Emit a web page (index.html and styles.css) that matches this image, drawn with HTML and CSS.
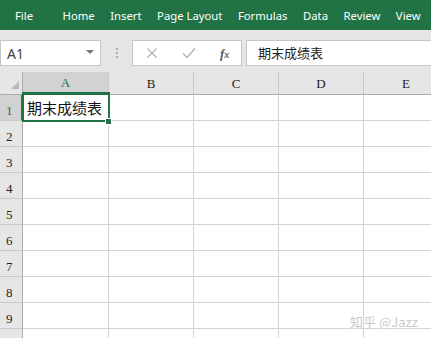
FILE: index.html
```html
<!DOCTYPE html>
<html lang="zh-CN">
<head>
    <meta charset="UTF-8">
    <meta name="viewport" content="width=device-width, initial-scale=1.0">
    <title>期末成绩表 - Excel</title>
    <link rel="stylesheet" href="styles.css">
</head>
<body>
    <!-- Ribbon tabs -->
    <div class="tabs">
        <span class="tab file">File</span>
        <span class="tab">Home</span>
        <span class="tab">Insert</span>
        <span class="tab">Page Layout</span>
        <span class="tab">Formulas</span>
        <span class="tab">Data</span>
        <span class="tab">Review</span>
        <span class="tab">View</span>
    </div>

    <!-- Name box + formula bar -->
    <div class="formula-row">
        <div class="name-box">
            <span>A1</span>
            <span class="caret"></span>
        </div>
        <div class="dots"><i></i><i></i><i></i></div>
        <div class="fx-buttons">
            <svg width="12" height="12" viewBox="0 0 12 12" class="btn-icon">
                <path d="M1.5 1.5 L10.5 10.5 M10.5 1.5 L1.5 10.5" stroke="#b4b4b4" stroke-width="1.3" fill="none"/>
            </svg>
            <svg width="14" height="12" viewBox="0 0 14 12" class="btn-icon">
                <path d="M1 6.5 L5 10.5 L13 1.5" stroke="#b4b4b4" stroke-width="1.5" fill="none"/>
            </svg>
            <span class="fx">f<sub>x</sub></span>
        </div>
        <div class="formula-input">期末成绩表</div>
    </div>

    <!-- Sheet -->
    <div class="sheet">
        <div class="corner"><span class="corner-tri"></span></div>
        <div class="col-head selected">A</div>
        <div class="col-head">B</div>
        <div class="col-head">C</div>
        <div class="col-head">D</div>
        <div class="col-head">E</div>

        <div class="row-head selected">1</div>
        <div class="cell active">期末成绩表</div>
        <div class="cell"></div><div class="cell"></div><div class="cell"></div><div class="cell"></div>

        <div class="row-head">2</div>
        <div class="cell"></div><div class="cell"></div><div class="cell"></div><div class="cell"></div><div class="cell"></div>
        <div class="row-head">3</div>
        <div class="cell"></div><div class="cell"></div><div class="cell"></div><div class="cell"></div><div class="cell"></div>
        <div class="row-head">4</div>
        <div class="cell"></div><div class="cell"></div><div class="cell"></div><div class="cell"></div><div class="cell"></div>
        <div class="row-head">5</div>
        <div class="cell"></div><div class="cell"></div><div class="cell"></div><div class="cell"></div><div class="cell"></div>
        <div class="row-head">6</div>
        <div class="cell"></div><div class="cell"></div><div class="cell"></div><div class="cell"></div><div class="cell"></div>
        <div class="row-head">7</div>
        <div class="cell"></div><div class="cell"></div><div class="cell"></div><div class="cell"></div><div class="cell"></div>
        <div class="row-head">8</div>
        <div class="cell"></div><div class="cell"></div><div class="cell"></div><div class="cell"></div><div class="cell"></div>
        <div class="row-head">9</div>
        <div class="cell"></div><div class="cell"></div><div class="cell"></div><div class="cell"></div><div class="cell"></div>
        <div class="row-head last"></div>
        <div class="cell last"></div><div class="cell last"></div><div class="cell last"></div><div class="cell last"></div><div class="cell last"></div>
    </div>

    <div class="watermark">知乎 @Jazz</div>
</body>
</html>
```

FILE: styles.css
```css
body {
    margin: 0;
    padding: 0;
    width: 431px;
    height: 338px;
    overflow: hidden;
    position: relative;
    background: #ffffff;
    font-family: "Noto Sans", "Noto Sans CJK SC", sans-serif;
}
.tabs {
    height: 30px;
    background: #217346;
    color: #ffffff;
    display: flex;
    align-items: center;
    gap: 15.5px;
    padding-left: 15px;
    font-size: 11.3px;
    white-space: nowrap;
}
.tab.file {
    margin-right: 14px;
}
.formula-row {
    height: 42px;
    background: #e6e6e6;
    display: flex;
    align-items: flex-start;
    padding-top: 10px;
    box-sizing: border-box;
}
.name-box {
    width: 101px;
    height: 26px;
    box-sizing: border-box;
    background: #ffffff;
    border: 1px solid #c6c6c6;
    display: flex;
    align-items: center;
    justify-content: space-between;
    padding: 0 6px 0 6px;
    font-size: 14px;
    color: #444444;
}
.caret {
    width: 0;
    height: 0;
    border-left: 4px solid transparent;
    border-right: 4px solid transparent;
    border-top: 4px solid #777777;
    margin-bottom: 2px;
}
.dots {
    width: 31px;
    height: 26px;
    display: flex;
    flex-direction: column;
    align-items: center;
    justify-content: center;
    gap: 2px;
}
.dots i {
    width: 2px;
    height: 2px;
    background: #a9a9a9;
}
.fx-buttons {
    width: 110px;
    height: 26px;
    box-sizing: border-box;
    background: #ffffff;
    border: 1px solid #c6c6c6;
    display: flex;
    align-items: center;
    padding-left: 13px;
}
.btn-icon {
    display: block;
}
.btn-icon + .btn-icon {
    margin-left: 24px;
}
.fx {
    margin-left: 24px;
    font-family: "Liberation Serif", serif;
    font-style: italic;
    font-weight: bold;
    font-size: 13px;
    color: #5a5a5a;
    line-height: 1;
}
.fx sub {
    font-size: 10px;
    vertical-align: 0;
}
.formula-input {
    flex: 1;
    margin-left: 4px;
    height: 26px;
    box-sizing: border-box;
    background: #ffffff;
    border: 1px solid #c6c6c6;
    border-right: none;
    padding-left: 11px;
    font-family: "Noto Sans CJK SC", sans-serif;
    font-size: 13px;
    line-height: 24px;
    color: #222222;
}
.sheet {
    display: grid;
    grid-template-columns: 23px 86px 85px 85px 85px 85px;
    grid-template-rows: 23px repeat(9, 26px) 9px;
    width: 449px;
    font-family: "Liberation Serif", serif;
}
.corner, .col-head, .row-head {
    background: #e6e6e6;
    box-sizing: border-box;
}
.corner {
    border-right: 1px solid #ababab;
    border-bottom: 1px solid #ababab;
    position: relative;
}
.corner-tri {
    position: absolute;
    right: 3px;
    bottom: 5px;
    width: 0;
    height: 0;
    border-left: 8px solid transparent;
    border-bottom: 8px solid #b9b9b9;
}
.col-head {
    border-right: 1px solid #c8c8c8;
    border-bottom: 1px solid #ababab;
    display: flex;
    align-items: flex-end;
    justify-content: center;
    padding-bottom: 2px;
    font-size: 13px;
    color: #222222;
}
.row-head {
    border-right: 1px solid #ababab;
    border-bottom: 1px solid #c8c8c8;
    display: flex;
    align-items: flex-end;
    padding-left: 6px;
    padding-bottom: 1px;
    font-size: 13px;
    color: #222222;
}
.row-head.last, .cell.last {
    border-bottom: none;
}
.col-head.selected, .row-head.selected {
    background: #d2d2d2;
    color: #217346;
}
.col-head.selected {
    border-bottom: 2px solid #217346;
}
.row-head.selected {
    border-right: 2px solid #217346;
}
.cell {
    box-sizing: border-box;
    border-right: 1px solid #d4d4d4;
    border-bottom: 1px solid #d4d4d4;
}
.cell.active {
    position: relative;
    display: flex;
    align-items: center;
    padding-left: 4px;
    font-family: "Noto Sans CJK SC", sans-serif;
    font-size: 15px;
    color: #111111;
    white-space: nowrap;
}
.cell.active::before {
    content: "";
    position: absolute;
    left: -1px;
    top: -3px;
    right: -2px;
    bottom: -2px;
    border: 2px solid #217346;
}
.cell.active::after {
    content: "";
    position: absolute;
    right: -4px;
    bottom: -5px;
    width: 5px;
    height: 5px;
    background: #217346;
    border: 1px solid #ffffff;
}
.watermark {
    position: absolute;
    left: 350px;
    top: 312px;
    font-family: "Noto Sans CJK SC", sans-serif;
    font-size: 13px;
    color: #c9c9c9;
    text-shadow: 0 0 2px #ffffff, 0 0 2px #ffffff;
    white-space: nowrap;
}
```
